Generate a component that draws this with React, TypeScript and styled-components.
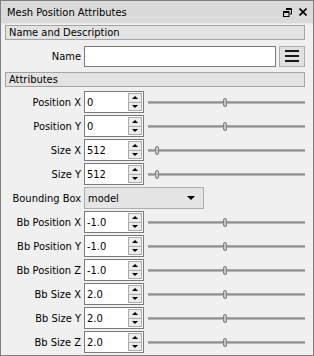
import React from 'react';
import styled, { createGlobalStyle } from 'styled-components';

// --- GLOBAL ---

const GlobalStyle = createGlobalStyle`
  html, body {
    margin: 0;
    padding: 0;
    background: #f0f0f0;
  }
  * {
    box-sizing: border-box;
  }
`;

// --- STYLED COMPONENTS ---

const Window = styled.div`
  width: 314px;
  height: 356px;
  border: 1px solid #7f7f7f;
  background: #f0f0f0;
  font-family: 'DejaVu Sans Condensed', 'DejaVu Sans', 'Liberation Sans', sans-serif;
  font-stretch: condensed;
  font-size: 11px;
  color: #000;
  display: flex;
  flex-direction: column;
  overflow: hidden;
`;

const TitleBar = styled.div`
  flex-shrink: 0;
  height: 23px;
  background: #dadada;
  border-bottom: 1px solid #e8e8e8;
  display: flex;
  align-items: center;
  padding: 0 6px 0 6px;
  font-size: 11px;
`;

const TitleText = styled.span`
  flex: 1;
`;

const TitleButtons = styled.div`
  display: flex;
  align-items: center;
  gap: 7px;
`;

const Content = styled.div`
  flex-shrink: 0;
  padding: 1px 8px 0 4px;
  display: flex;
  flex-direction: column;
`;

const SectionHeader = styled.div<{ $gap?: number }>`
  height: 15px;
  border: 1px solid #a3a3a3;
  background: #e3e3e3;
  padding-left: 3px;
  display: flex;
  align-items: center;
  font-size: 11px;
  margin-bottom: ${({ $gap }) => $gap ?? 5}px;
`;

const FormGrid = styled.div<{ $gap?: number }>`
  display: grid;
  grid-template-columns: 76px 1fr;
  column-gap: 3px;
  row-gap: 2px;
  margin-bottom: ${({ $gap }) => $gap ?? 0}px;
`;

const Label = styled.div`
  height: 22px;
  display: flex;
  align-items: center;
  justify-content: flex-end;
  white-space: nowrap;
`;

const FieldRow = styled.div`
  display: flex;
  align-items: center;
  gap: 3px;
  height: 22px;
`;

const TextInput = styled.div`
  flex: 1;
  height: 21px;
  border: 1px solid #7a7a7a;
  background: #fff;
`;

const MenuButton = styled.div`
  width: 26px;
  height: 21px;
  border: 1px solid #adadad;
  background: #e1e1e1;
  display: flex;
  flex-direction: column;
  align-items: center;
  justify-content: center;
  gap: 3px;
`;

const MenuLine = styled.span`
  width: 14px;
  height: 2px;
  background: #1a1a1a;
`;

const SpinBox = styled.div`
  width: 60px;
  height: 22px;
  border: 1px solid #7a7a7a;
  background: #fff;
  display: flex;
  align-items: stretch;
  padding: 1px 1px 1px 0;
`;

const SpinValue = styled.div`
  flex: 1;
  display: flex;
  align-items: center;
  padding-left: 2px;
`;

const SpinButtons = styled.div`
  width: 14px;
  border: 1px solid #adadad;
  background: #ececec;
  display: flex;
  flex-direction: column;
`;

const SpinArrow = styled.div<{ $down?: boolean }>`
  flex: 1;
  display: flex;
  align-items: center;
  justify-content: center;
  ${({ $down }) => ($down ? 'border-top: 1px solid #adadad;' : '')}

  &::after {
    content: '';
    width: 0;
    height: 0;
    border-left: 3px solid transparent;
    border-right: 3px solid transparent;
    ${({ $down }) =>
      $down ? 'border-top: 3px solid #000;' : 'border-bottom: 3px solid #000;'}
  }
`;

const Slider = styled.div`
  flex: 1;
  position: relative;
  height: 22px;
  margin-left: 1px;
  display: flex;
  align-items: center;
`;

const Groove = styled.div`
  width: 100%;
  height: 3px;
  background: #8f8f8f;
  border-top: 1px solid #a8a8a8;
  border-bottom: 1px solid #b8b8b8;
`;

const Handle = styled.div`
  position: absolute;
  top: 7px;
  width: 4px;
  height: 9px;
  margin-left: -2px;
  border: 1px solid #7d7d7d;
  border-radius: 2px;
  background: #c8c8c8;
`;

const Combo = styled.div`
  width: 120px;
  height: 22px;
  border: 1px solid #adadad;
  background: #e5e5e5;
  display: flex;
  align-items: center;
  justify-content: space-between;
  padding: 0 8px 0 3px;

  &::after {
    content: '';
    width: 0;
    height: 0;
    border-left: 4px solid transparent;
    border-right: 4px solid transparent;
    border-top: 4px solid #000;
  }
`;

// --- DATA ---

type SliderField = { label: string; value: string; pos: number };

const topFields: SliderField[] = [
  { label: 'Position X', value: '0', pos: 0.49 },
  { label: 'Position Y', value: '0', pos: 0.49 },
  { label: 'Size X', value: '512', pos: 0.058 },
  { label: 'Size Y', value: '512', pos: 0.058 },
];

const bbFields: SliderField[] = [
  { label: 'Bb Position X', value: '-1.0', pos: 0.49 },
  { label: 'Bb Position Y', value: '-1.0', pos: 0.49 },
  { label: 'Bb Position Z', value: '-1.0', pos: 0.49 },
  { label: 'Bb Size X', value: '2.0', pos: 0.49 },
  { label: 'Bb Size Y', value: '2.0', pos: 0.49 },
  { label: 'Bb Size Z', value: '2.0', pos: 0.49 },
];

// --- COMPONENTS ---

const FloatIcon = () => (
  <svg width="9" height="9" viewBox="0 0 9 9">
    <path d="M3 0.5h5.5v5.5h-2" fill="none" stroke="#000" strokeWidth="1" />
    <rect x="3" y="1" width="5" height="1" fill="#000" />
    <rect x="0.5" y="3.5" width="5.5" height="5" fill="none" stroke="#000" strokeWidth="1" />
    <rect x="0.5" y="3.5" width="5.5" height="1.5" fill="#000" />
  </svg>
);

const CloseIcon = () => (
  <svg width="8" height="8" viewBox="0 0 8 8">
    <path d="M0.5 0.5L7.5 7.5M7.5 0.5L0.5 7.5" stroke="#000" strokeWidth="1.6" />
  </svg>
);

const SliderRow: React.FC<{ field: SliderField }> = ({ field }) => (
  <>
    <Label>{field.label}</Label>
    <FieldRow>
      <SpinBox>
        <SpinValue>{field.value}</SpinValue>
        <SpinButtons>
          <SpinArrow />
          <SpinArrow $down />
        </SpinButtons>
      </SpinBox>
      <Slider>
        <Groove />
        <Handle style={{ left: `${field.pos * 100}%` }} />
      </Slider>
    </FieldRow>
  </>
);

const App: React.FC = () => {
  return (
    <>
      <GlobalStyle />
      <Window>
        <TitleBar>
          <TitleText>Mesh Position Attributes</TitleText>
          <TitleButtons>
            <FloatIcon />
            <CloseIcon />
          </TitleButtons>
        </TitleBar>
        <Content>
          <SectionHeader>Name and Description</SectionHeader>
          <FormGrid $gap={5}>
            <Label>Name</Label>
            <FieldRow>
              <TextInput />
              <MenuButton>
                <MenuLine />
                <MenuLine />
                <MenuLine />
              </MenuButton>
            </FieldRow>
          </FormGrid>
          <SectionHeader $gap={4}>Attributes</SectionHeader>
          <FormGrid>
            {topFields.map((f) => (
              <SliderRow key={f.label} field={f} />
            ))}
            <Label>Bounding Box</Label>
            <FieldRow>
              <Combo>model</Combo>
            </FieldRow>
            {bbFields.map((f) => (
              <SliderRow key={f.label} field={f} />
            ))}
          </FormGrid>
        </Content>
      </Window>
    </>
  );
};

export default App;
